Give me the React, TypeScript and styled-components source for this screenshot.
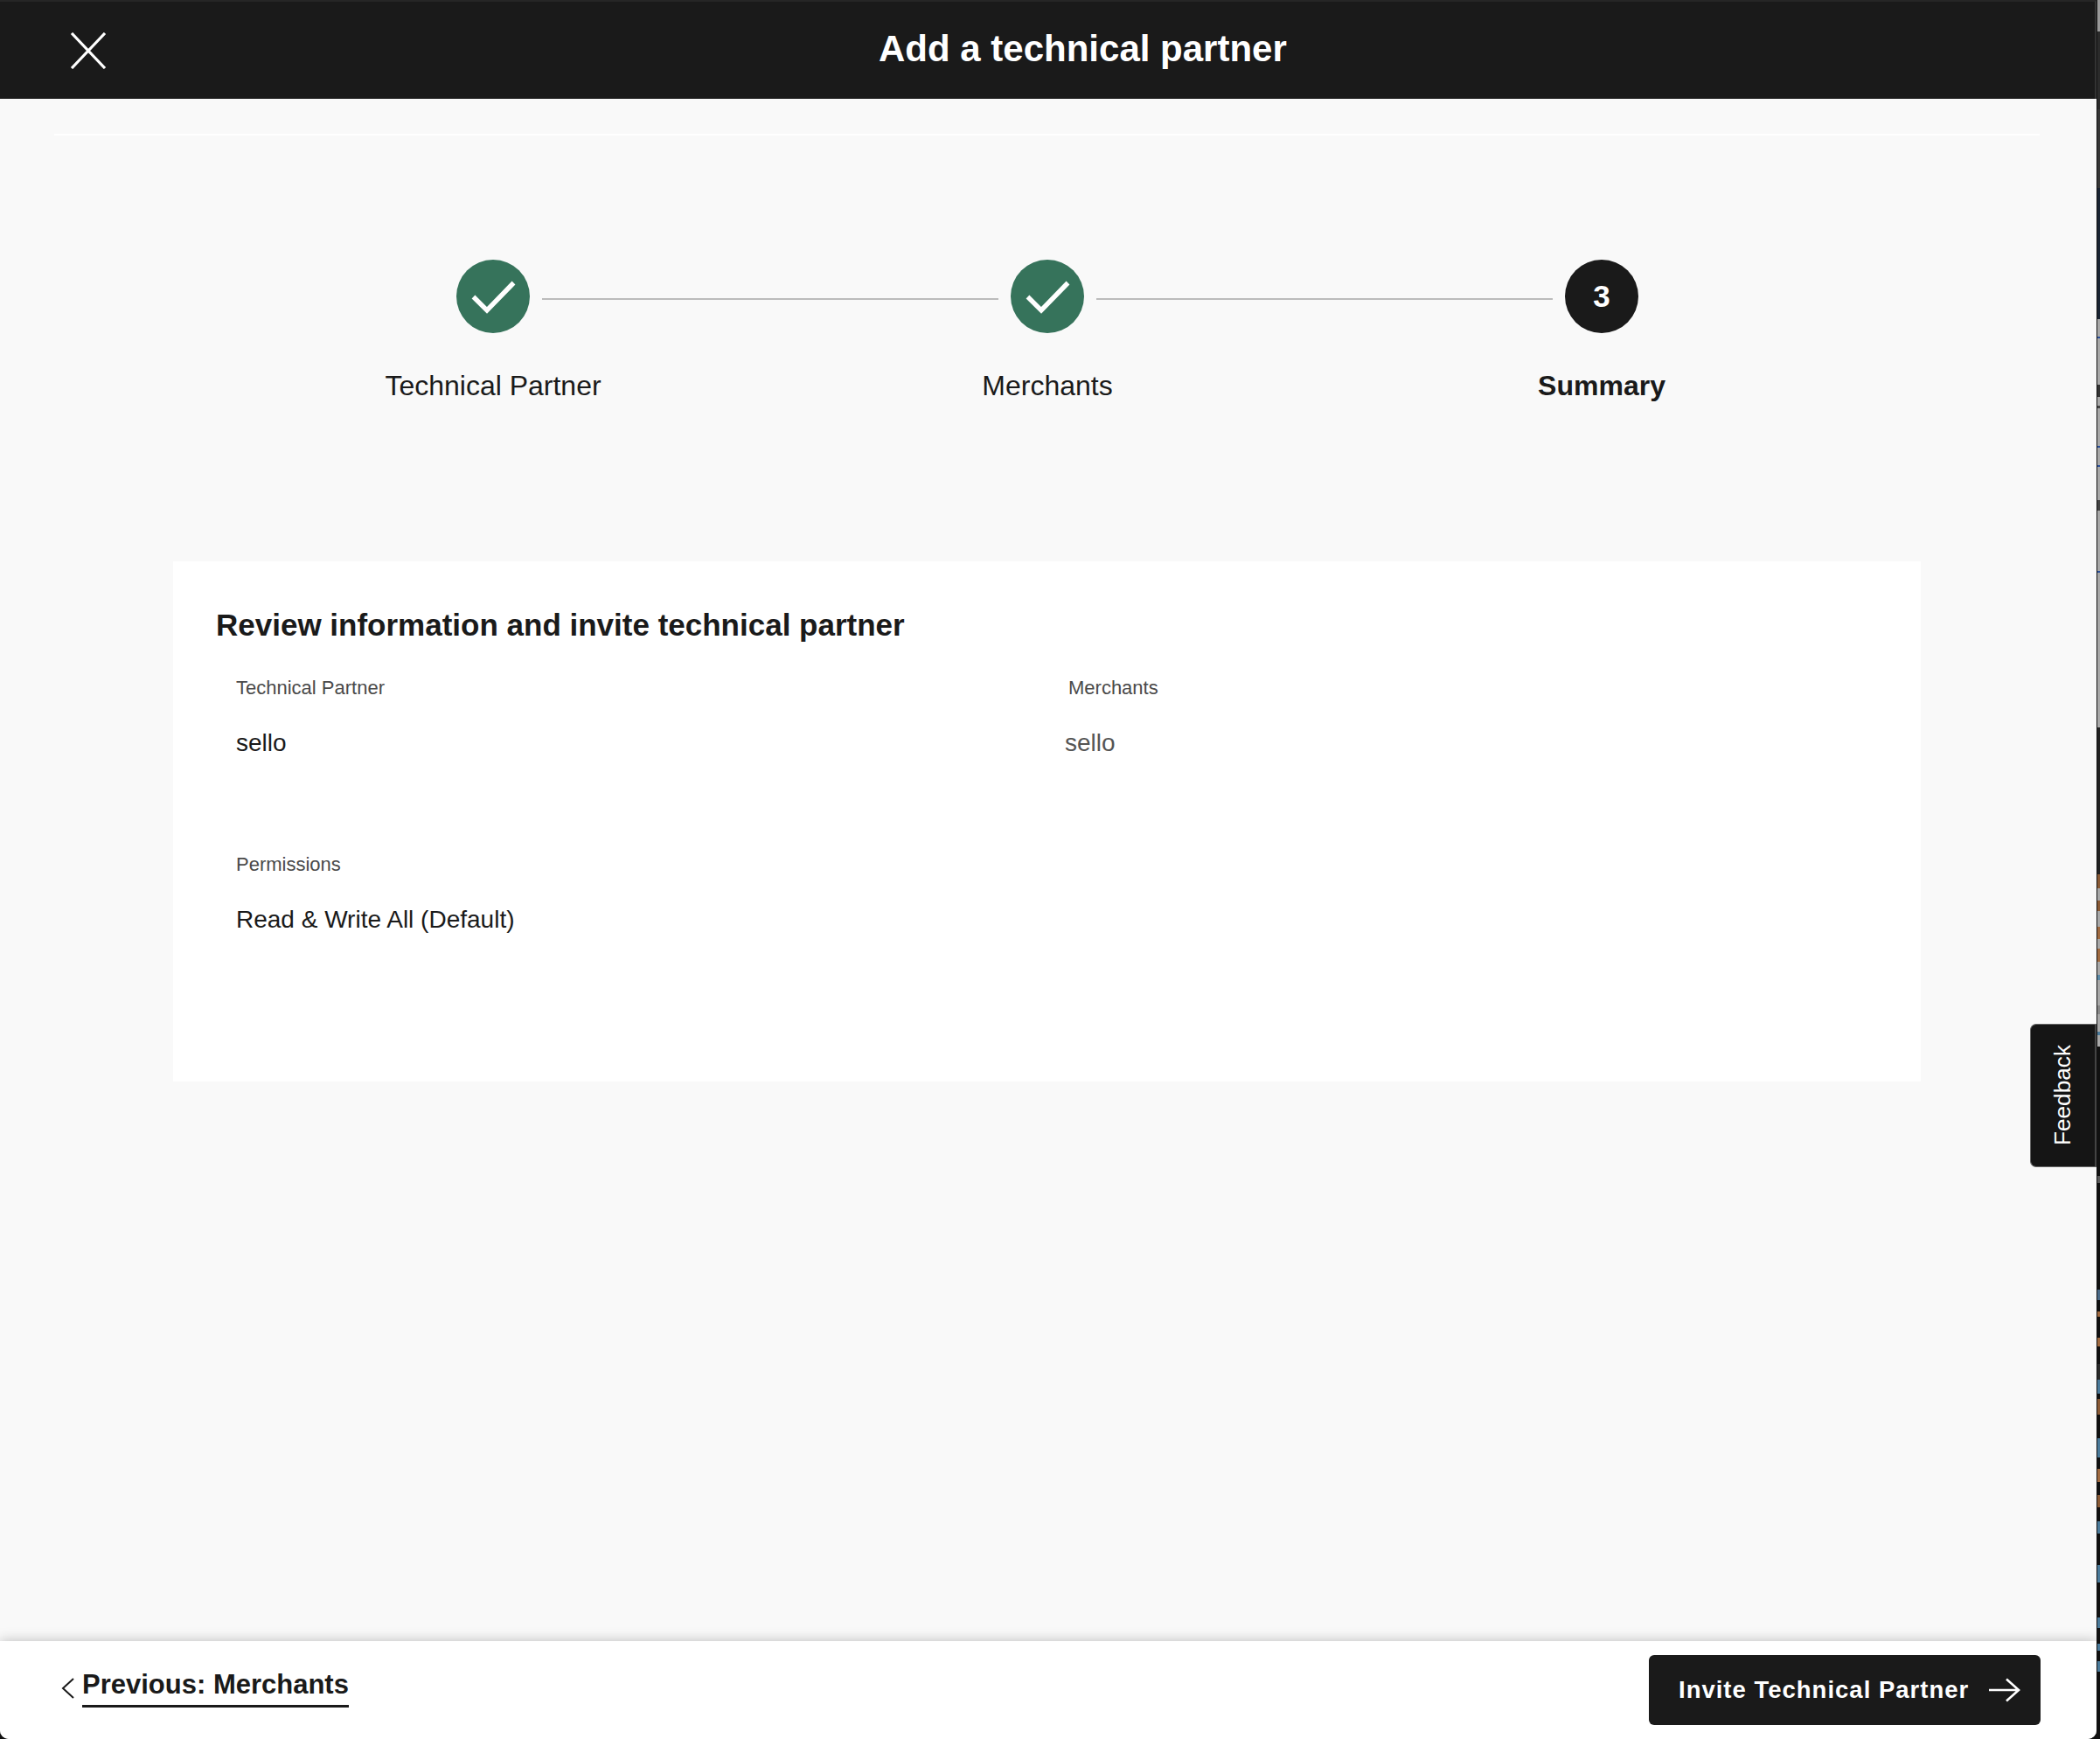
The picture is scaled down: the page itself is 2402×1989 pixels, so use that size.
import React from "react";
import styled, { createGlobalStyle } from "styled-components";

const Global = createGlobalStyle`
  html, body { margin: 0; padding: 0; background: #111; }
  body { font-family: "Liberation Sans", Arial, sans-serif; color: #1a1a1a; overflow: hidden; }
  * { box-sizing: border-box; }
`;

const Page = styled.div`
  width: 2402px;
  height: 1989px;
  display: flex;
  background: #111;
`;

const Panel = styled.div`
  position: relative;
  width: 2398px;
  height: 100%;
  flex: none;
  display: flex;
  flex-direction: column;
  background: #f9f9f9;
  border-radius: 0 0 10px 10px;
  overflow: hidden;
`;

const BackdropStrip = styled.svg`
  width: 4px;
  height: 1989px;
  flex: none;
  display: block;
`;

const Header = styled.header`
  height: 113px;
  flex: none;
  display: flex;
  align-items: center;
  padding-left: 80px;
  background: #1a1a1a;
  border-top: 2px solid #262626;
  border-right: 2px solid #333;
`;

const CloseButton = styled.button`
  width: 42px;
  height: 42px;
  padding: 0;
  border: 0;
  display: block;
  background: none;
`;

const Title = styled.h1`
  margin: -3px 0 0 883px;
  font-size: 42px;
  line-height: 54px;
  font-weight: 700;
  color: #fff;
  white-space: nowrap;
`;

const Divider = styled.div`
  height: 2px;
  flex: none;
  margin: 40px 65px 0 62px;
  background: #fff;
`;

const Track = styled.div`
  display: flex;
  align-items: center;
  width: 1352px;
  margin: 142px auto 0 522px;
`;

const Circle = styled.div<{ $done?: boolean }>`
  width: 84px;
  height: 84px;
  flex: none;
  border-radius: 50%;
  display: flex;
  align-items: center;
  justify-content: center;
  background: ${(p) => (p.$done ? "#36735b" : "#1a1a1a")};
  color: #fff;
  font-size: 35px;
  font-weight: 700;
`;

const Connector = styled.div`
  flex: 1;
  height: 2px;
  margin: 6px 14px 0;
  background: #bcbcbc;
`;

const Labels = styled.div`
  display: grid;
  grid-template-columns: repeat(3, 634px);
  margin: 38px 0 0 247px;
`;

const StepLabel = styled.div<{ $active?: boolean }>`
  text-align: center;
  font-size: 32px;
  line-height: 44px;
  font-weight: ${(p) => (p.$active ? 700 : 400)};
  white-space: nowrap;
`;

const Card = styled.section`
  flex: none;
  height: 595px;
  margin: 179px 201px 0 198px;
  padding: 49px 49px 0;
  background: #fff;
`;

const CardTitle = styled.h2`
  margin: 0;
  font-size: 35px;
  line-height: 48px;
  font-weight: 700;
  white-space: nowrap;
`;

const Details = styled.div`
  display: grid;
  grid-template-columns: 948px 1fr;
  grid-auto-rows: 202px;
  margin: 33px 0 0 23px;
`;

const Field = styled.div``;

const FieldLabel = styled.div<{ $indent?: boolean }>`
  height: 30px;
  margin-left: ${(p) => (p.$indent ? "4px" : 0)};
  font-size: 22px;
  line-height: 30px;
  color: #4a4a4a;
`;

const FieldValue = styled.div<{ $muted?: boolean }>`
  margin-top: 30px;
  font-size: 28px;
  line-height: 36px;
  color: ${(p) => (p.$muted ? "#555" : "#1a1a1a")};
`;

const Footer = styled.footer`
  margin-top: auto;
  height: 112px;
  flex: none;
  display: flex;
  align-items: flex-start;
  justify-content: space-between;
  padding: 16px 64px 0 70px;
  background: #fff;
  box-shadow: 0 0 14px rgba(0, 0, 0, 0.25);
`;

const BackLink = styled.a`
  display: flex;
  align-items: flex-start;
  gap: 8px;
  color: #1a1a1a;
  text-decoration: none;
`;

const BackText = styled.span`
  display: block;
  margin-top: 15px;
  padding-bottom: 4px;
  border-bottom: 3px solid #1a1a1a;
  font-size: 31px;
  line-height: 38px;
  font-weight: 700;
  white-space: nowrap;
`;

const BackIcon = styled.svg`
  width: 16px;
  height: 28px;
  margin-top: 24px;
  flex: none;
`;

const PrimaryButton = styled.button`
  width: 448px;
  height: 80px;
  display: flex;
  align-items: center;
  gap: 22px;
  padding: 0 0 0 34px;
  border: 0;
  border-radius: 6px;
  background: #1a1a1a;
  color: #fff;
  font-family: inherit;
  font-size: 27.5px;
  font-weight: 700;
  letter-spacing: 1px;
  white-space: nowrap;
`;

const ArrowIcon = styled.svg`
  width: 37px;
  height: 28px;
  flex: none;
`;

const FeedbackTab = styled.button`
  position: absolute;
  right: 0;
  top: 1171px;
  width: 76px;
  height: 164px;
  padding: 0;
  display: flex;
  align-items: center;
  justify-content: center;
  border: 1px solid #666;
  border-right: 2px solid #444;
  border-radius: 7px 0 0 7px;
  background: #151515;
  color: #fff;
  font-family: inherit;
  font-size: 26.2px;
`;

const FeedbackText = styled.span`
  display: block;
  writing-mode: vertical-rl;
  transform: rotate(180deg);
`;

const Check = () => (
  <svg width="84" height="84" viewBox="0 0 84 84" fill="none">
    <path d="M19.5 42.5 L35 58 L65.5 26.5" stroke="#fff" strokeWidth="5.4" />
  </svg>
);

const stripBands: [number, number, string][] = [
  [0, 36, "#999"],
  [36, 125, "#2b2b2b"],
  [125, 215, "#363636"],
  [215, 365, "#1a2433"],
  [365, 832, "#a8a8a8"],
  [385, 2, "#2a4f9a"],
  [440, 14, "#333"],
  [464, 3, "#444"],
  [510, 2, "#2a4f9a"],
  [532, 2, "#2a4f9a"],
  [572, 12, "#444"],
  [653, 2, "#2a4f9a"],
  [832, 168, "#222"],
  [1000, 16, "#8a5a35"],
  [1030, 12, "#8a5a35"],
  [1060, 14, "#a06a40"],
  [1085, 15, "#a06a40"],
  [1115, 6, "#5a8aa8"],
  [1150, 10, "#888"],
  [1180, 4, "#4a7a9a"],
  [1345, 8, "#5a5a5a"],
  [1475, 12, "#4a6a88"],
  [1500, 6, "#a06a40"],
  [1530, 10, "#a06a40"],
  [1560, 18, "#2a2a2a"],
  [1578, 16, "#4a7a9a"],
  [1600, 18, "#8a5a35"],
  [1645, 22, "#4a7a9a"],
  [1680, 15, "#a06a40"],
  [1710, 14, "#8a5a35"],
  [1740, 14, "#4a7a9a"],
  [1790, 20, "#4a7a9a"],
  [1850, 12, "#4a7a9a"],
  [1880, 8, "#4a7a9a"],
  [1900, 12, "#4a7a9a"],
];

export default function App() {
  return (
    <Page>
      <Global />
      <Panel>
        <Header>
          <CloseButton aria-label="Close">
            <svg width="42" height="42" viewBox="0 0 42 42" fill="none">
              <path d="M2 1 L40 41 M40 1 L2 41" stroke="#fff" strokeWidth="3.2" />
            </svg>
          </CloseButton>
          <Title>Add a technical partner</Title>
        </Header>
        <Divider />
        <Track>
          <Circle $done><Check /></Circle>
          <Connector />
          <Circle $done><Check /></Circle>
          <Connector />
          <Circle>3</Circle>
        </Track>
        <Labels>
          <StepLabel>Technical Partner</StepLabel>
          <StepLabel>Merchants</StepLabel>
          <StepLabel $active>Summary</StepLabel>
        </Labels>
        <Card>
          <CardTitle>Review information and invite technical partner</CardTitle>
          <Details>
            <Field>
              <FieldLabel>Technical Partner</FieldLabel>
              <FieldValue>sello</FieldValue>
            </Field>
            <Field>
              <FieldLabel $indent>Merchants</FieldLabel>
              <FieldValue $muted>sello</FieldValue>
            </Field>
            <Field>
              <FieldLabel>Permissions</FieldLabel>
              <FieldValue>Read &amp; Write All (Default)</FieldValue>
            </Field>
          </Details>
        </Card>
        <Footer>
          <BackLink>
            <BackIcon viewBox="0 0 16 28" fill="none">
              <path d="M14 3 L2 14 L14 25" stroke="#1a1a1a" strokeWidth="2" />
            </BackIcon>
            <BackText>Previous: Merchants</BackText>
          </BackLink>
          <PrimaryButton>
            Invite Technical Partner
            <ArrowIcon viewBox="0 0 37 28" fill="none">
              <path d="M1 14 H35 M21 1.5 L35 14 L21 26.5" stroke="#fff" strokeWidth="2.6" />
            </ArrowIcon>
          </PrimaryButton>
        </Footer>
        <FeedbackTab>
          <FeedbackText>Feedback</FeedbackText>
        </FeedbackTab>
      </Panel>
      <BackdropStrip viewBox="0 0 4 1989" aria-hidden="true">
        {stripBands.map(([y, h, fill], i) => (
          <rect key={i} x="1" y={y} width="3" height={h} fill={fill} />
        ))}
      </BackdropStrip>
    </Page>
  );
}
